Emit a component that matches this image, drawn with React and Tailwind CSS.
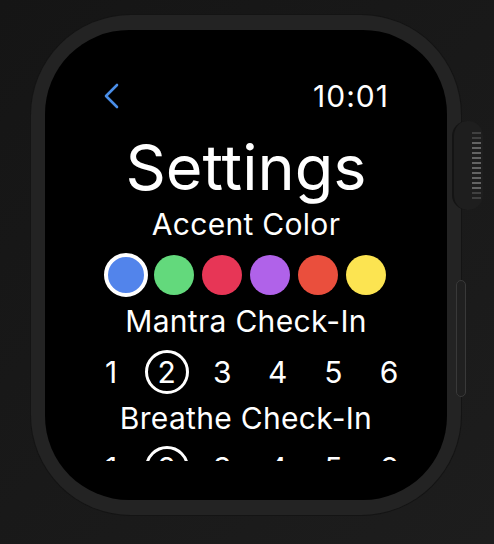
export default function App() {
  const colors = ['#5284EB', '#63D97C', '#E73656', '#B062E9', '#EA4F3D', '#FCE451'];
  const nums = [1, 2, 3, 4, 5, 6];
  const font = { fontFamily: 'Inter, "Noto Sans", sans-serif' };

  const NumRow = () => (
    <div className="flex justify-center pl-[8px]">
      {nums.map((n) => (
        <div key={n} className="w-[55.6px] h-[44px] flex items-center justify-center">
          {n === 2 ? (
            <div className="w-[44px] h-[44px] rounded-full border-[3px] border-white flex items-center justify-center text-[30px] leading-[30px] text-white">
              {n}
            </div>
          ) : (
            <span className="text-[30px] leading-[30px] text-white">{n}</span>
          )}
        </div>
      ))}
    </div>
  );

  return (
    <div
      className="w-[494px] h-[544px] bg-[linear-gradient(135deg,#151515,#1d1d1d)] pl-[31px] pt-[15px] overflow-hidden"
      style={font}
    >
      <div className="relative w-[430px] h-[500px]">
        <div className="w-full h-full rounded-[100px] bg-[#232323] px-[14px] py-[15px] ring-1 ring-[#141414]">
          <div className="h-full rounded-[84px] bg-black overflow-hidden flex flex-col">
            <div className="mt-[52px] flex justify-between items-center px-[58px] h-[29px]">
              <svg width="16" height="26" viewBox="0 0 16 26" className="-mt-[2px]">
                <polyline points="14,2 3,13 14,24" fill="none" stroke="#4A8EE8" strokeWidth="2.6" strokeLinecap="round" strokeLinejoin="round" />
              </svg>
              <span className="text-[30px] leading-[29px] text-white font-normal tracking-[1px]">10:01</span>
            </div>
            <div className="mt-[25px] text-center text-white text-[63px] leading-[62px] font-normal">Settings</div>
            <div className="mt-[11px] text-center text-white text-[30px] leading-[30px] tracking-[0.3px]">Accent Color</div>
            <div className="mt-[14px] h-[44px] flex justify-center items-center gap-[8px]">
              {colors.map((c, i) =>
                i === 0 ? (
                  <div key={c} className="w-[44px] h-[44px] -mx-[2px] rounded-full border-4 border-white bg-[#5284EB]" />
                ) : (
                  <div key={c} className="w-[40px] h-[40px] rounded-full" style={{ backgroundColor: c }} />
                )
              )}
            </div>
            <div className="mt-[9px] text-center text-white text-[30px] leading-[30px] tracking-[0.3px]">Mantra Check-In</div>
            <div className="mt-[14px]">
              <NumRow />
            </div>
            <div className="mt-[9px] text-center text-white text-[30px] leading-[30px] tracking-[0.3px]">Breathe Check-In</div>
            <div className="mt-[13px] h-[15px] overflow-hidden">
              <NumRow />
            </div>
          </div>
        </div>
        {/* Digital crown */}
        <div className="absolute left-[421px] top-[106px] w-[31px] h-[89px] rounded-[15px] bg-[#1e1e1e] border-l-2 border-[#141414] overflow-hidden flex flex-col justify-center items-end pr-[2px] gap-[3px]">
          {Array.from({ length: 14 }).map((_, i) => (
            <div
              key={i}
              className="w-[9px] h-[2px] bg-[#6a6a6a]"
              style={{ opacity: i < 2 || i > 11 ? 0.45 : 0.9 }}
            />
          ))}
        </div>
        {/* Side button */}
        <div className="absolute left-[425px] top-[265px] w-[10px] h-[117px] rounded-full bg-[#202020] border border-[#393939]" />
      </div>
    </div>
  );
}
